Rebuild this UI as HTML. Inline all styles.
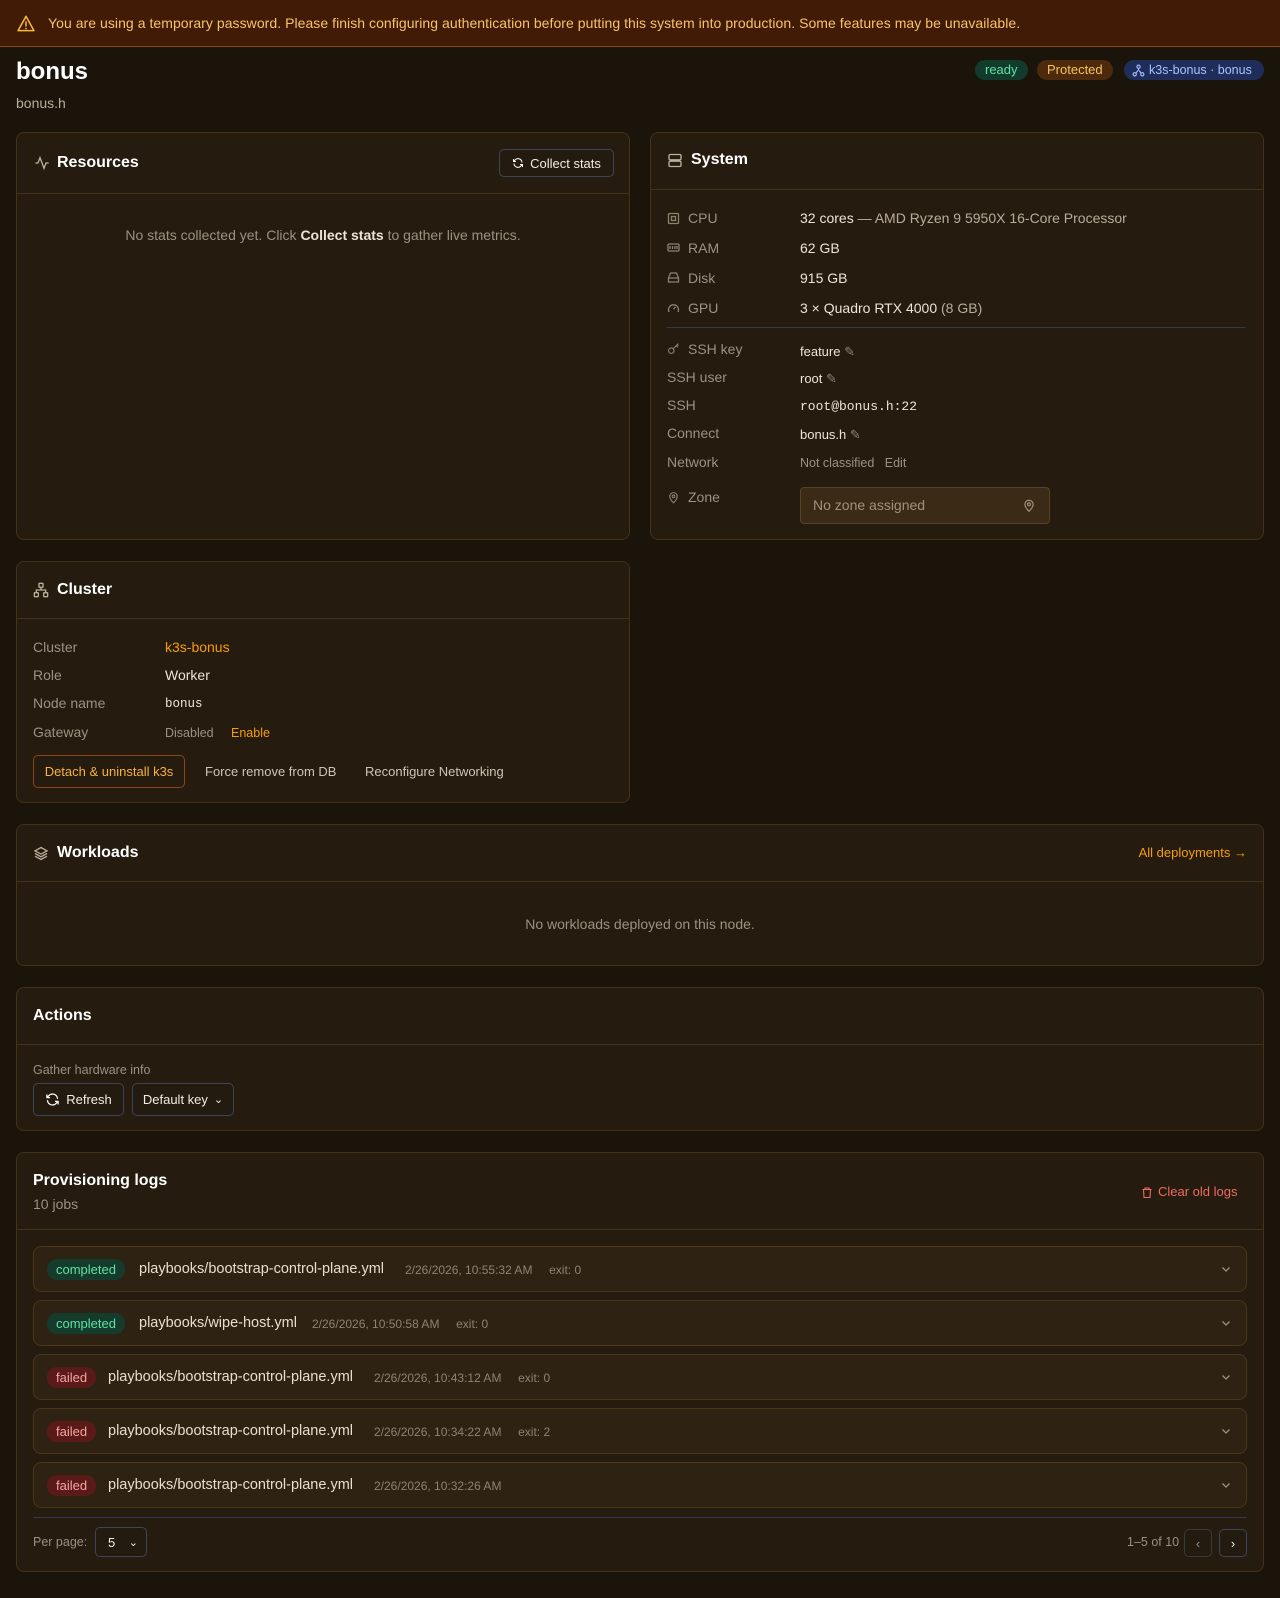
<!DOCTYPE html>
<html><head><meta charset="utf-8"><style>
*{box-sizing:border-box;margin:0;padding:0}
body{width:1280px;height:1598px;background:#1b140b;font-family:"Liberation Sans",sans-serif;color:#e8e0d0;position:relative;overflow:hidden}
.abs{position:absolute}
.banner{left:0;top:0;width:1280px;height:47px;background:#421b06;border-bottom:1px solid #8a4a18;color:#f4c46a;font-size:14px;line-height:47px;padding-left:48px;white-space:nowrap;letter-spacing:0.05px}
.panel{position:absolute;background:#251b0e;border:1px solid #433219;border-radius:8px}
.hdr{position:absolute;left:0;right:0;top:0;border-bottom:1px solid #433219}
.ttl{position:absolute;font-size:16px;font-weight:bold;color:#fff}
.lbl{position:absolute;font-size:14px;color:#9d9180}
.val{position:absolute;font-size:14px;color:#ece4d4}
.mono{font-family:"Liberation Mono",monospace;font-size:13px}
.badge{position:absolute;height:20px;line-height:20px;border-radius:10px;font-size:13px;padding:0 10px;white-space:nowrap}
.btn{position:absolute;border:1px solid #3d4657;border-radius:5px;background:#231a10;color:#f2ece2;font-size:13px;display:flex;align-items:center;justify-content:center;gap:6px}
.row{position:absolute;left:16px;width:1214px;height:46px;background:#2e2213;border:1px solid #4a3618;border-radius:8px}
.pill{position:absolute;left:13px;top:12px;height:21px;line-height:21px;border-radius:10px;font-size:13px;padding:0 9px}
.ok{background:#143b2c;color:#5fe0a6}
.bad{background:#5a1a18;color:#f6a4a0}
.rt{position:absolute;top:14px;font-size:14.5px;color:#e6dece}
.rd{position:absolute;top:16px;font-size:12px;color:#8e8270}
.chev{position:absolute;right:14px;top:16px}
svg{display:block}
</style></head><body>
<div class="abs banner">You are using a temporary password. Please finish configuring authentication before putting this system into production. Some features may be unavailable.</div>
<svg class="abs" style="left:16px;top:14px" width="20" height="19" viewBox="0 0 24 24" fill="none" stroke="#f5b63a" stroke-width="2" stroke-linejoin="round"><path d="M12 3L2 21h20z"/><path d="M12 10v5M12 18v.5" stroke-linecap="round"/></svg>

<div class="abs" style="left:16px;top:58px;font-size:24px;font-weight:bold;color:#fff">bonus</div>
<div class="abs" style="left:16px;top:95px;font-size:14px;color:#b8ad9b">bonus.h</div>
<div class="badge" style="left:975px;top:60px;background:#123b2c;color:#5fe0a6">ready</div>
<div class="badge" style="left:1037px;top:60px;background:#4d2a0c;color:#f8c25a">Protected</div>
<div class="badge" style="left:1124px;top:60px;background:#1e2d5a;color:#a9c2ff;width:140px;padding-left:25px;font-size:12.5px">k3s-bonus · bonus</div>
<svg class="abs" style="left:1132px;top:64px" width="13" height="13" viewBox="0 0 24 24" fill="none" stroke="#a9c2ff" stroke-width="2"><circle cx="12" cy="5" r="3"/><circle cx="5" cy="19" r="3"/><circle cx="19" cy="19" r="3"/><path d="M12 8v4M7 17l4-5M17 17l-4-5"/></svg>

<!-- Resources -->
<div class="panel" style="left:16px;top:132px;width:614px;height:408px">
 <div class="hdr" style="height:61px"></div>
 <svg class="abs" style="left:17px;top:22px" width="16" height="16" viewBox="0 0 24 24" fill="none" stroke="#bcb09c" stroke-width="2"><path d="M2 12h4l3-8 6 16 3-8h4"/></svg>
 <div class="ttl" style="left:40px;top:21px">Resources</div>
 <div class="btn" style="left:482px;top:16px;width:115px;height:28px"><svg width="12" height="12" viewBox="0 0 24 24" fill="none" stroke="#fff" stroke-width="2"><path d="M20 11a8 8 0 0 0-14-5L3 9M4 13a8 8 0 0 0 14 5l3-3M3 4v5h5M21 20v-5h-5"/></svg>Collect stats</div>
 <div class="abs" style="left:0;width:612px;top:94px;text-align:center;font-size:14px;color:#9d9180">No stats collected yet. Click <b style="color:#ece4d4">Collect stats</b> to gather live metrics.</div>
</div>

<!-- System -->
<div class="panel" style="left:650px;top:132px;width:614px;height:408px">
 <div class="hdr" style="height:57px"></div>
 <svg class="abs" style="left:16px;top:19px" width="16" height="17" viewBox="0 0 24 24" fill="none" stroke="#bcb09c" stroke-width="2"><rect x="3" y="3" width="18" height="8" rx="2"/><rect x="3" y="13" width="18" height="8" rx="2"/><path d="M7 7h.01M7 17h.01"/></svg>
 <div class="ttl" style="left:40px;top:18px">System</div>
 <div class="lbl" style="left:37px;top:77px">CPU</div><div class="val" style="left:149px;top:77px">32 cores <span style="color:#b9ad9a">— AMD Ryzen 9 5950X 16-Core Processor</span></div>
 <div class="lbl" style="left:37px;top:107px">RAM</div><div class="val" style="left:149px;top:107px">62 GB</div>
 <div class="lbl" style="left:37px;top:137px">Disk</div><div class="val" style="left:149px;top:137px">915 GB</div>
 <div class="lbl" style="left:37px;top:167px">GPU</div><div class="val" style="left:149px;top:167px">3 × Quadro RTX 4000 <span style="color:#b9ad9a">(8 GB)</span></div>
 <svg class="abs" style="left:16px;top:79px" width="13" height="130" viewBox="0 0 13 130" fill="none" stroke="#8e8270" stroke-width="1.3"><rect x="1.5" y="1.5" width="10" height="10" rx="1"/><rect x="4.5" y="4.5" width="4" height="4"/><rect x="1" y="32" width="11" height="7" rx="1"/><path d="M3 34v3M5.5 34v3M8 34v3M10 34v3"/><path d="M1.5 66l2-5h6l2 5v4h-10z M1.5 66h10"/><path d="M2 100a5 5 0 1 1 9 0M6.5 97l2-2"/></svg>
 <div class="abs" style="left:16px;top:194px;width:578px;height:1px;background:#2f3a4d"></div>
 <svg class="abs" style="left:16px;top:209px" width="14" height="13" viewBox="0 0 24 24" fill="none" stroke="#8e8270" stroke-width="2"><circle cx="7" cy="16" r="5"/><path d="M10.5 12.5L20 3M16 7l3 3M18 5l2 2"/></svg>
 <div class="lbl" style="left:37px;top:208px">SSH key</div><div class="val" style="left:149px;top:211px;font-size:13px">feature <span style="color:#8e8270">✎</span></div>
 <div class="lbl" style="left:16px;top:236px">SSH user</div><div class="val" style="left:149px;top:238px;font-size:13px">root <span style="color:#8e8270">✎</span></div>
 <div class="lbl" style="left:16px;top:264px">SSH</div><div class="val mono" style="left:149px;top:266px">root@bonus.h:22</div>
 <div class="lbl" style="left:16px;top:292px">Connect</div><div class="val" style="left:149px;top:294px;font-size:13px">bonus.h <span style="color:#8e8270">✎</span></div>
 <div class="lbl" style="left:16px;top:321px">Network</div><div class="val" style="left:149px;top:323px;font-size:12.5px;color:#9d9180">Not classified&nbsp;&nbsp; Edit</div>
 <svg class="abs" style="left:16px;top:357px" width="13" height="15" viewBox="0 0 24 24" fill="none" stroke="#8e8270" stroke-width="2"><path d="M12 22s-7-7-7-12a7 7 0 0 1 14 0c0 5-7 12-7 12z"/><circle cx="12" cy="10" r="2.5"/></svg>
 <div class="lbl" style="left:37px;top:356px">Zone</div>
 <div class="abs" style="left:149px;top:354px;width:250px;height:37px;background:#3b2b16;border:1px solid #574225;border-radius:4px;color:#9d9180;font-size:14px;line-height:35px;padding-left:12px">No zone assigned</div>
 <svg class="abs" style="left:371px;top:364px" width="14" height="17" viewBox="0 0 24 24" fill="none" stroke="#9d9180" stroke-width="2"><path d="M12 22s-7-7-7-12a7 7 0 0 1 14 0c0 5-7 12-7 12z"/><circle cx="12" cy="10" r="2.5"/></svg>
</div>

<!-- Cluster -->
<div class="panel" style="left:16px;top:561px;width:614px;height:242px">
 <div class="hdr" style="height:57px"></div>
 <svg class="abs" style="left:16px;top:20px" width="16" height="16" viewBox="0 0 24 24" fill="none" stroke="#bcb09c" stroke-width="2"><rect x="9" y="2" width="6" height="6" rx="1"/><rect x="2" y="16" width="6" height="6" rx="1"/><rect x="16" y="16" width="6" height="6" rx="1"/><path d="M5 16v-4h14v4M12 8v4"/></svg>
 <div class="ttl" style="left:40px;top:19px">Cluster</div>
 <div class="lbl" style="left:16px;top:77px">Cluster</div><div class="val" style="left:148px;top:77px;color:#f59e0b">k3s-bonus</div>
 <div class="lbl" style="left:16px;top:105px">Role</div><div class="val" style="left:148px;top:105px">Worker</div>
 <div class="lbl" style="left:16px;top:133px">Node name</div><div class="val mono" style="left:148px;top:135px;font-size:12.5px">bonus</div>
 <div class="lbl" style="left:16px;top:162px">Gateway</div><div class="val" style="left:148px;top:164px;font-size:12.5px;color:#9d9180">Disabled&nbsp;&nbsp;&nbsp;&nbsp; <b style="color:#f59e0b;font-weight:normal">Enable</b></div>
 <div class="abs" style="left:16px;top:193px;width:152px;height:33px;border:1px solid #8a4418;border-radius:5px;color:#f7b23b;font-size:13px;line-height:31px;text-align:center">Detach &amp; uninstall k3s</div>
 <div class="abs" style="left:188px;top:202px;font-size:13px;color:#cfc5b4">Force remove from DB</div>
 <div class="abs" style="left:348px;top:202px;font-size:13px;color:#cfc5b4">Reconfigure Networking</div>
</div>

<!-- Workloads -->
<div class="panel" style="left:16px;top:824px;width:1248px;height:142px">
 <div class="hdr" style="height:57px"></div>
 <svg class="abs" style="left:16px;top:20px" width="16" height="17" viewBox="0 0 24 24" fill="none" stroke="#bcb09c" stroke-width="2"><path d="M12 3l9 5-9 5-9-5z"/><path d="M3 12l9 5 9-5M3 16l9 5 9-5"/></svg>
 <div class="ttl" style="left:40px;top:19px">Workloads</div>
 <div class="abs" style="right:16px;top:20px;font-size:13px;color:#f59e0b">All deployments →</div>
 <div class="abs" style="left:0;width:1246px;top:91px;text-align:center;font-size:14px;color:#9d9180">No workloads deployed on this node.</div>
</div>

<!-- Actions -->
<div class="panel" style="left:16px;top:987px;width:1248px;height:144px">
 <div class="hdr" style="height:57px"></div>
 <div class="ttl" style="left:16px;top:19px">Actions</div>
 <div class="abs" style="left:16px;top:75px;font-size:12.5px;color:#9d9180">Gather hardware info</div>
 <div class="btn" style="left:16px;top:95px;width:91px;height:33px"><svg width="15" height="15" viewBox="0 0 24 24" fill="none" stroke="#fff" stroke-width="2"><path d="M20 11a8 8 0 0 0-14-5L3 9M4 13a8 8 0 0 0 14 5l3-3M3 4v5h5M21 20v-5h-5"/></svg>Refresh</div>
 <div class="btn" style="left:115px;top:95px;width:102px;height:33px">Default key <span style="font-size:11px">⌄</span></div>
</div>

<!-- Provisioning logs -->
<div class="panel" style="left:16px;top:1152px;width:1248px;height:420px">
 <div class="hdr" style="height:77px"></div>
 <div class="ttl" style="left:16px;top:19px">Provisioning logs</div>
 <div class="abs" style="left:16px;top:43px;font-size:14px;color:#9d9180">10 jobs</div>
 <svg class="abs" style="left:1124px;top:33px" width="12" height="13" viewBox="0 0 24 24" fill="none" stroke="#ef6b63" stroke-width="2.2"><path d="M3 6h18M8 6V3h8v3M5 6l1 16h12l1-16"/></svg>
 <div class="abs" style="left:1141px;top:31px;font-size:13px;color:#ef6b63">Clear old logs</div>

 <div class="row" style="top:93px"><div class="pill ok">completed</div><div class="rt" style="left:105px">playbooks/bootstrap-control-plane.yml</div><div class="rd" style="left:371px">2/26/2026, 10:55:32 AM&nbsp;&nbsp;&nbsp;&nbsp; exit: 0</div><svg class="chev" width="12" height="12" viewBox="0 0 24 24" fill="none" stroke="#9d9180" stroke-width="2.5"><path d="M5 9l7 7 7-7"/></svg></div>
 <div class="row" style="top:147px"><div class="pill ok">completed</div><div class="rt" style="left:105px">playbooks/wipe-host.yml</div><div class="rd" style="left:278px">2/26/2026, 10:50:58 AM&nbsp;&nbsp;&nbsp;&nbsp; exit: 0</div><svg class="chev" width="12" height="12" viewBox="0 0 24 24" fill="none" stroke="#9d9180" stroke-width="2.5"><path d="M5 9l7 7 7-7"/></svg></div>
 <div class="row" style="top:201px"><div class="pill bad">failed</div><div class="rt" style="left:74px">playbooks/bootstrap-control-plane.yml</div><div class="rd" style="left:340px">2/26/2026, 10:43:12 AM&nbsp;&nbsp;&nbsp;&nbsp; exit: 0</div><svg class="chev" width="12" height="12" viewBox="0 0 24 24" fill="none" stroke="#9d9180" stroke-width="2.5"><path d="M5 9l7 7 7-7"/></svg></div>
 <div class="row" style="top:255px"><div class="pill bad">failed</div><div class="rt" style="left:74px">playbooks/bootstrap-control-plane.yml</div><div class="rd" style="left:340px">2/26/2026, 10:34:22 AM&nbsp;&nbsp;&nbsp;&nbsp; exit: 2</div><svg class="chev" width="12" height="12" viewBox="0 0 24 24" fill="none" stroke="#9d9180" stroke-width="2.5"><path d="M5 9l7 7 7-7"/></svg></div>
 <div class="row" style="top:309px"><div class="pill bad">failed</div><div class="rt" style="left:74px">playbooks/bootstrap-control-plane.yml</div><div class="rd" style="left:340px">2/26/2026, 10:32:26 AM</div><svg class="chev" width="12" height="12" viewBox="0 0 24 24" fill="none" stroke="#9d9180" stroke-width="2.5"><path d="M5 9l7 7 7-7"/></svg></div>

 <div class="abs" style="left:16px;top:364px;width:1214px;height:1px;background:#2f3a4d"></div>
 <div class="abs" style="left:16px;top:382px;font-size:12.5px;color:#9d9180">Per page:</div>
 <div class="btn" style="left:78px;top:374px;width:52px;height:30px;justify-content:space-between;padding:0 8px 0 12px">5 <span style="font-size:11px">⌄</span></div>
 <div class="abs" style="left:1110px;top:382px;font-size:12.5px;color:#9d9180">1–5 of 10</div>
 <div class="btn" style="left:1167px;top:376px;width:28px;height:28px;border-color:#363a40;color:#9d9180">‹</div>
 <div class="btn" style="left:1202px;top:376px;width:28px;height:28px">›</div>
</div>
</body></html>
